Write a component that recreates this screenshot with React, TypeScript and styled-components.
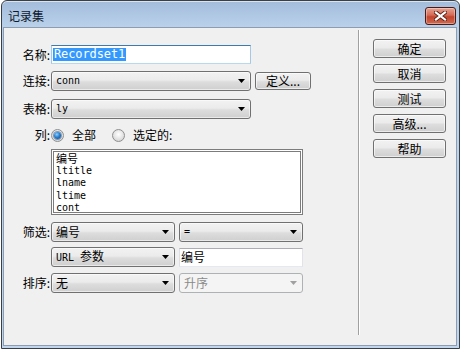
import styled, { createGlobalStyle, css } from 'styled-components'

const GlobalStyle = createGlobalStyle`
  html, body {
    margin: 0;
    padding: 0;
    background: #ffffff;
  }
  body {
    font-family: "Noto Sans CJK SC", sans-serif;
    font-size: 12px;
    color: #000;
  }
`

const cjk = `"Noto Sans CJK SC", sans-serif`
const mono = `"DejaVu Sans Mono", "Liberation Mono", "Noto Sans CJK SC", monospace`

const Window = styled.div`
  box-sizing: border-box;
  width: 459px;
  height: 349px;
  margin-left: 1px;
  border: 1px solid #3a3f46;
  border-radius: 6px 6px 0 0;
  background: linear-gradient(#a3bcdb, #b9d1ea 26px, #c0d6ee);
  padding: 0 2px 2px 1px;
  display: flex;
  flex-direction: column;
  box-shadow: inset 0 1px 0 rgba(255, 255, 255, 0.6);
`

const TitleBar = styled.div`
  height: 26px;
  flex-shrink: 0;
  display: flex;
  align-items: flex-start;
`

const TitleText = styled.div`
  margin: 6px 0 0 5px;
  font-family: ${cjk};
  font-size: 12px;
  line-height: 17px;
  color: #10182a;
`

const CloseButton = styled.div`
  box-sizing: border-box;
  width: 31px;
  height: 18px;
  margin: 6px 1px 0 auto;
  border: 1px solid #4a1a14;
  border-radius: 3px;
  background: linear-gradient(#e8a493, #d46a55 45%, #c2452d 55%, #cf6a50);
  box-shadow: inset 0 0 0 1px rgba(255, 255, 255, 0.35);
  display: flex;
  align-items: center;
  justify-content: center;
`

const Client = styled.div`
  flex: 1;
  display: flex;
  border: 1px solid #8d9cae;
  background: #f0f0f0;
`

const Form = styled.div`
  width: 354px;
  flex-shrink: 0;
  display: flex;
  flex-direction: column;
`

const Row = styled.div<{ $top: number; $height: number }>`
  display: flex;
  align-items: center;
  margin-top: ${(p) => p.$top}px;
  height: ${(p) => p.$height}px;
`

const Label = styled.div`
  width: 46px;
  flex-shrink: 0;
  padding-right: 1px;
  text-align: right;
  font-family: ${cjk};
  font-size: 12px;
  line-height: 14px;
  white-space: nowrap;
`

const TextBox = styled.div<{ $width: number; $focused?: boolean }>`
  box-sizing: border-box;
  width: ${(p) => p.$width}px;
  height: 19px;
  background: #fff;
  border: 1px solid;
  border-color: ${(p) =>
    p.$focused ? '#3d7bad #a4c9e3 #b7d9ed #a4c9e3' : '#abadb3 #e2e3ea #e3e9ef #dbdfe6'};
  display: flex;
  align-items: center;
  padding-left: 1px;
  font-family: ${cjk};
  font-size: 12px;
  line-height: 14px;
  white-space: nowrap;
`

const Selected = styled.span`
  background: #3399ff;
  color: #fff;
  font-family: ${mono};
  font-size: 12px;
  letter-spacing: -0.1px;
  line-height: 13px;
  padding: 0 1px;
`

const ComboBox = styled.div<{ $width: number; $disabled?: boolean }>`
  box-sizing: border-box;
  width: ${(p) => p.$width}px;
  height: 20px;
  border: 1px solid ${(p) => (p.$disabled ? '#adb2b5' : '#707070')};
  border-radius: 3px;
  background: ${(p) =>
    p.$disabled
      ? '#f4f4f4'
      : 'linear-gradient(#f2f2f2, #ebebeb 45%, #dddddd 55%, #cfcfcf)'};
  box-shadow: ${(p) => (p.$disabled ? 'none' : 'inset 0 0 0 1px rgba(255,255,255,0.55)')};
  color: ${(p) => (p.$disabled ? '#8a8a8a' : '#000')};
  display: flex;
  align-items: center;
  padding: 0 5px 0 4px;
`

const Latin = styled.span`
  font-family: ${mono};
  font-size: 10px;
`

const ComboText = styled.span<{ $latin?: boolean }>`
  flex: 1;
  white-space: nowrap;
  font-size: 12px;
  line-height: 14px;
  ${(p) =>
    p.$latin
      ? css`
          font-family: ${mono};
          font-size: 10px;
        `
      : css`
          font-family: ${cjk};
        `}
`

const PushButton = styled.div<{ $width: number; $height: number }>`
  box-sizing: border-box;
  width: ${(p) => p.$width}px;
  height: ${(p) => p.$height}px;
  border: 1px solid #707070;
  border-radius: 3px;
  background: linear-gradient(#f2f2f2, #ebebeb 45%, #dddddd 55%, #cfcfcf);
  box-shadow: inset 0 0 0 1px rgba(255, 255, 255, 0.6);
  display: flex;
  align-items: center;
  justify-content: center;
  font-family: ${cjk};
  font-size: 12px;
  line-height: 14px;
  white-space: nowrap;
`

const Radio = styled.span<{ $checked?: boolean }>`
  box-sizing: border-box;
  width: 13px;
  height: 13px;
  flex-shrink: 0;
  border-radius: 50%;
  border: 1px solid #8e8f8f;
  background: radial-gradient(circle at 50% 40%, #ffffff 0%, #e8e8e8 45%, #c9c9c9 100%);
  display: flex;
  align-items: center;
  justify-content: center;
  ${(p) =>
    p.$checked &&
    css`
      &::after {
        content: '';
        width: 7px;
        height: 7px;
        border-radius: 50%;
        background: radial-gradient(circle at 40% 35%, #8fd0ff 0%, #2a7fd0 45%, #0d3f7a 100%);
        box-shadow: 0 0 0 1px rgba(30, 70, 120, 0.5);
      }
    `}
`

const RadioText = styled.span<{ $gapRight: number }>`
  margin-left: 8px;
  margin-right: ${(p) => p.$gapRight}px;
  font-family: ${cjk};
  font-size: 12px;
  line-height: 14px;
  white-space: nowrap;
`

const ListBox = styled.div`
  box-sizing: border-box;
  width: 252px;
  height: 66px;
  background: #fff;
  border: 3px double #7c7c7c;
  padding: 0 0 0 2px;
  overflow: hidden;
`

const ListItem = styled.div<{ $latin?: boolean }>`
  height: 12.5px;
  line-height: 12.5px;
  white-space: nowrap;
  ${(p) =>
    p.$latin
      ? css`
          font-family: ${mono};
          font-size: 10px;
        `
      : css`
          font-family: ${cjk};
          font-size: 11px;
        `}
`

const Gap = styled.div<{ $w: number }>`
  width: ${(p) => p.$w}px;
  flex-shrink: 0;
`

const Separator = styled.div`
  width: 1px;
  margin-top: 2px;
  height: 305px;
  background: #a0a0a0;
  border-right: 1px solid #ffffff;
`

const ButtonColumn = styled.div`
  display: flex;
  flex-direction: column;
  gap: 6px;
  padding: 11px 0 0 13px;
`

function Arrow({ disabled }: { disabled?: boolean }) {
  return (
    <svg width="7" height="4" viewBox="0 0 7 4">
      <polygon points="0,0 7,0 3.5,4" fill={disabled ? '#a0a0a0' : '#000'} />
    </svg>
  )
}

function CloseGlyph() {
  return (
    <svg width="13" height="10" viewBox="0 0 13 10">
      <path d="M2 1.5 L11 8.5 M11 1.5 L2 8.5" stroke="#5a2318" strokeWidth="4" strokeLinecap="square" />
      <path d="M2 1.5 L11 8.5 M11 1.5 L2 8.5" stroke="#ffffff" strokeWidth="2.2" strokeLinecap="square" />
    </svg>
  )
}

export default function App() {
  return (
    <>
      <GlobalStyle />
      <Window>
        <TitleBar>
          <TitleText>记录集</TitleText>
          <CloseButton>
            <CloseGlyph />
          </CloseButton>
        </TitleBar>
        <Client>
          <Form>
            <Row $top={17} $height={19}>
              <Label>名称:</Label>
              <TextBox $width={200} $focused>
                <Selected>Recordset1</Selected>
              </TextBox>
            </Row>
            <Row $top={7} $height={20}>
              <Label>连接:</Label>
              <ComboBox $width={200}>
                <ComboText $latin>conn</ComboText>
                <Arrow />
              </ComboBox>
              <Gap $w={4} />
              <PushButton $width={56} $height={18}>定义...</PushButton>
            </Row>
            <Row $top={8} $height={20}>
              <Label>表格:</Label>
              <ComboBox $width={200}>
                <ComboText $latin>ly</ComboText>
                <Arrow />
              </ComboBox>
            </Row>
            <Row $top={9} $height={14}>
              <Label>列:</Label>
              <Radio $checked />
              <RadioText $gapRight={16}>全部</RadioText>
              <Radio />
              <RadioText $gapRight={0}>选定的:</RadioText>
            </Row>
            <Row $top={7} $height={66}>
              <Label />
              <ListBox>
                <ListItem>编号</ListItem>
                <ListItem $latin>ltitle</ListItem>
                <ListItem $latin>lname</ListItem>
                <ListItem $latin>ltime</ListItem>
                <ListItem $latin>cont</ListItem>
              </ListBox>
            </Row>
            <Row $top={7} $height={20}>
              <Label>筛选:</Label>
              <ComboBox $width={124}>
                <ComboText>编号</ComboText>
                <Arrow />
              </ComboBox>
              <Gap $w={4} />
              <ComboBox $width={124}>
                <ComboText $latin>=</ComboText>
                <Arrow />
              </ComboBox>
            </Row>
            <Row $top={5} $height={20}>
              <Label />
              <ComboBox $width={124}>
                <ComboText>
                  <Latin>URL </Latin>参数
                </ComboText>
                <Arrow />
              </ComboBox>
              <Gap $w={4} />
              <TextBox $width={124}>编号</TextBox>
            </Row>
            <Row $top={6} $height={20}>
              <Label>排序:</Label>
              <ComboBox $width={124}>
                <ComboText>无</ComboText>
                <Arrow />
              </ComboBox>
              <Gap $w={4} />
              <ComboBox $width={124} $disabled>
                <ComboText>升序</ComboText>
                <Arrow disabled />
              </ComboBox>
            </Row>
          </Form>
          <Separator />
          <ButtonColumn>
            <PushButton $width={73} $height={19}>确定</PushButton>
            <PushButton $width={73} $height={19}>取消</PushButton>
            <PushButton $width={73} $height={19}>测试</PushButton>
            <PushButton $width={73} $height={19}>高级...</PushButton>
            <PushButton $width={73} $height={19}>帮助</PushButton>
          </ButtonColumn>
        </Client>
      </Window>
    </>
  )
}
